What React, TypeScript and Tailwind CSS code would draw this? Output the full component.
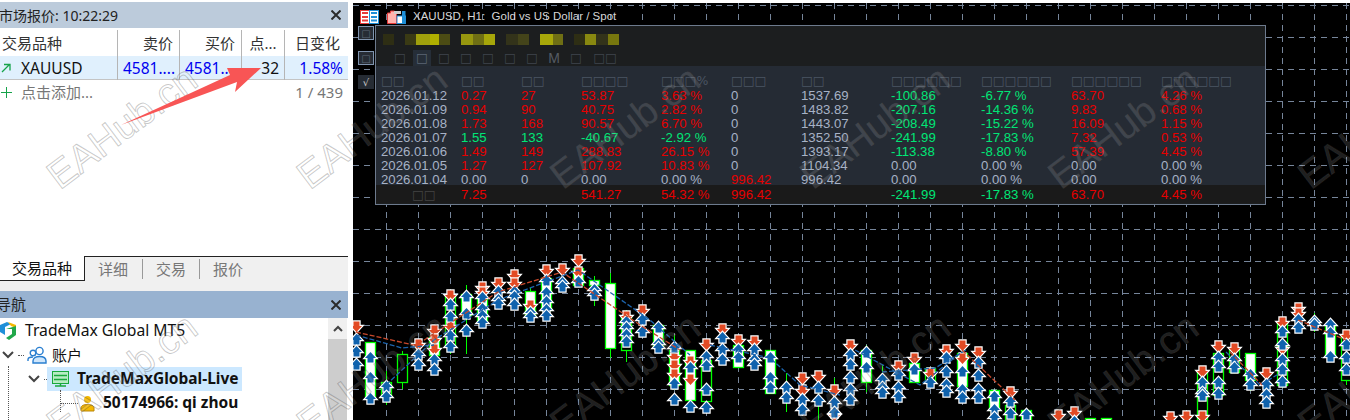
const cjk = 'font-["Noto_Sans","Noto_Sans_CJK_SC",sans-serif]'

type Col = { x: number; body?: [number, number]; wick?: [number, number]; solid?: boolean; u?: number[]; d?: number[] }

const cols: Col[] = [
  { x: 356, d: [326], u: [340, 352, 365] },
  { x: 370, body: [342, 396], solid: true, u: [358, 378, 399] },
  { x: 386, body: [382, 397], wick: [371, 405], u: [387, 397] },
  { x: 402, body: [354, 382], wick: [351, 389] },
  { x: 418, d: [344], u: [355, 365], wick: [340, 370] },
  { x: 434, body: [337, 355], solid: true, d: [330, 339, 349], u: [360, 370] },
  { x: 450, body: [296, 345], wick: [290, 354], d: [295, 326], u: [305, 317, 336, 347] },
  { x: 466, body: [294, 315], solid: true, wick: [285, 354], u: [297, 314, 331] },
  { x: 482, body: [297, 320], solid: true, wick: [285, 325], d: [287, 292], u: [298, 309, 316, 323] },
  { x: 498, d: [283], u: [292, 300, 304] },
  { x: 514, wick: [270, 310], d: [275, 283], u: [292, 297, 305] },
  { x: 530, body: [291, 315], solid: true, wick: [288, 320], d: [305], u: [313, 317] },
  { x: 546, body: [278, 310], solid: true, d: [270], u: [281, 293, 302, 310, 316] },
  { x: 562, d: [269], u: [283, 287] },
  { x: 578, body: [268, 285], solid: true, d: [260, 272], u: [282] },
  { x: 594, body: [280, 285], solid: true, wick: [276, 306], u: [290, 295] },
  { x: 610, body: [283, 348], solid: true, wick: [273, 358] },
  { x: 626, body: [316, 350], wick: [310, 362], d: [316], u: [322, 328, 335, 342] },
  { x: 642, d: [310], u: [320, 332] },
  { x: 658, body: [325, 347], solid: true, u: [328, 344, 348] },
  { x: 674, body: [350, 385], solid: true, wick: [335, 390], u: [348, 384, 400], d: [356, 365, 374] },
  { x: 690, body: [350, 400], solid: true, d: [361, 379], u: [368, 407] },
  { x: 706, body: [360, 401], d: [344], u: [357, 366, 390, 408] },
  { x: 722, d: [329], u: [338, 350, 360] },
  { x: 738, body: [345, 367], solid: true, d: [340], u: [350, 358] },
  { x: 754, d: [341], u: [350, 360, 365] },
  { x: 770, body: [350, 393], solid: true, u: [358, 378, 388] },
  { x: 786, wick: [373, 412], u: [388, 398] },
  { x: 802, d: [378, 390], u: [400, 410] },
  { x: 818, wick: [372, 420], d: [376], u: [388, 401] },
  { x: 834, wick: [378, 420], d: [390, 415], u: [403, 413] },
  { x: 850, wick: [340, 405], d: [345], u: [355, 365, 378, 390, 400] },
  { x: 866, body: [350, 382], solid: true, wick: [345, 392], u: [353, 368] },
  { x: 882, wick: [365, 398], u: [380, 388, 393] },
  { x: 898, d: [366], u: [375, 388, 397] },
  { x: 914, body: [363, 382], solid: true, d: [358], u: [370] },
  { x: 930, body: [368, 382], d: [373], u: [383] },
  { x: 946, d: [350], u: [358, 372, 385, 392] },
  { x: 962, body: [353, 386], solid: true, d: [345, 358], u: [372, 390, 398] },
  { x: 978, d: [352], u: [363, 376, 390, 398] },
  { x: 994, body: [390, 410], solid: true, u: [397, 410, 418] },
  { x: 1010, d: [392], u: [402, 414], body: [405, 420] },
  { x: 1026, body: [410, 425], solid: true, u: [415] },
  { x: 1058, d: [415] },
  { x: 1074, d: [412], u: [422] },
  { x: 1090, body: [418, 430], solid: true },
  { x: 1106, body: [418, 430], solid: true },
  { x: 1170, d: [417] },
  { x: 1186, d: [416] },
  { x: 1202, body: [372, 425], d: [371, 416], u: [383, 393, 396] },
  { x: 1218, body: [353, 395], d: [346], u: [358, 367, 383, 394] },
  { x: 1234, body: [350, 372], d: [348], u: [360, 368] },
  { x: 1250, body: [353, 380], solid: true, wick: [353, 391], u: [375, 385] },
  { x: 1266, d: [373], u: [385, 395, 403] },
  { x: 1282, body: [322, 385], wick: [318, 388], d: [322, 348], u: [332, 345, 360, 370, 382] },
  { x: 1298, d: [308, 313], u: [320, 328] },
  { x: 1314, wick: [313, 332], u: [322, 325] },
  { x: 1330, body: [325, 355], solid: true, u: [325, 333, 357] },
  { x: 1346, body: [335, 380], wick: [330, 385], d: [335], u: [345, 358, 370] },
]

const blocks: [number, string][] = [
  [11, '#2e2e14'], [11, 'transparent'], [11, '#3a3a14'], [14, '#a0a00c'], [9, '#b0b000'], [11, '#4c4c14'], [11, 'transparent'],
  [12, '#97970f'], [11, '#6f6f14'], [11, '#a6a60a'], [11, 'transparent'], [12, '#33331a'], [11, '#44441a'], [11, 'transparent'],
  [13, '#a8a80a'], [10, '#6f6f14'], [11, 'transparent'], [11, '#2e2e14'], [11, '#888810'], [12, '#33331a'], [11, '#77770e'],
]

const R = 'text-[#e60000]'
const G = 'text-[#00e676]'
const N = 'text-[#a7b2c6]'

const rows: [string, string][][] = [
  [['2026.01.12', N], ['0.27', R], ['27', R], ['53.87', R], ['3.63 %', R], ['0', N], ['1537.69', N], ['-100.86', G], ['-6.77 %', G], ['63.70', R], ['4.26 %', R]],
  [['2026.01.09', N], ['0.94', R], ['90', R], ['40.75', R], ['2.82 %', R], ['0', N], ['1483.82', N], ['-207.16', G], ['-14.36 %', G], ['9.83', R], ['0.68 %', R]],
  [['2026.01.08', N], ['1.73', R], ['168', R], ['90.57', R], ['6.70 %', R], ['0', N], ['1443.07', N], ['-208.49', G], ['-15.22 %', G], ['16.09', R], ['1.15 %', R]],
  [['2026.01.07', N], ['1.55', G], ['133', G], ['-40.67', G], ['-2.92 %', G], ['0', N], ['1352.50', N], ['-241.99', G], ['-17.83 %', G], ['7.32', R], ['0.53 %', R]],
  [['2026.01.06', N], ['1.49', R], ['149', R], ['288.83', R], ['26.15 %', R], ['0', N], ['1393.17', N], ['-113.38', G], ['-8.80 %', G], ['57.39', R], ['4.45 %', R]],
  [['2026.01.05', N], ['1.27', R], ['127', R], ['107.92', R], ['10.83 %', R], ['0', N], ['1104.34', N], ['0.00', N], ['0.00 %', N], ['0.00', N], ['0.00 %', N]],
  [['2026.01.04', N], ['0.00', N], ['0', N], ['0.00', N], ['0.00 %', N], ['996.42', R], ['996.42', N], ['0.00', N], ['0.00 %', N], ['0.00', N], ['0.00 %', N]],
]

const heads = ['□□', '□□', '□□', '□□□□', '□□□%', '□□□', '□□', '□□□□□□', '□□□□□□', '□□□□□□', '□□□□□□']
const footer: [string, string][] = [['', N], ['7.25', R], ['', N], ['541.27', R], ['54.32 %', R], ['996.42', R], ['', N], ['-241.99', G], ['-17.83 %', G], ['63.70', R], ['4.45 %', R]]
const tabs = ['□', '□', '□', '□', '□', '□', '□', 'M', '□', '□□']

const grid = 'grid grid-cols-[80px_60px_60px_80px_70px_70px_90px_90px_90px_90px_1fr] pl-[5px]'

function UpArrow({ x, y }: { x: number; y: number }) {
  return <path d={`M${x} ${y - 6}l5.5 6h-2.5v4.5h-6v-4.5h-2.5z`} fill="#0f62ad" stroke="#fff" strokeWidth="2.4" paintOrder="stroke" />
}

function DownArrow({ x, y }: { x: number; y: number }) {
  return <path d={`M${x} ${y + 6}l-5.5 -6h2.5v-4.5h6v4.5h2.5z`} fill="#e24a24" stroke="#fff" strokeWidth="2.4" paintOrder="stroke" />
}

function ChartCanvas() {
  const vs = Array.from({ length: 31 }, (_, i) => 386.5 + i * 32)
  const hs = Array.from({ length: 13 }, (_, i) => 5.5 + i * 32)
  return (
    <svg className="absolute inset-0" width="997" height="417" viewBox="353 3 997 417">
      {vs.map((v) => (
        <line key={v} x1={v} y1="3" x2={v} y2="420" stroke="#76859a" strokeDasharray="6 5" />
      ))}
      {hs.map((h) => (
        <line key={h} x1="353" y1={h} x2="1350" y2={h} stroke="#76859a" strokeDasharray="6 5" />
      ))}
      {cols.map((c) => (
        <g key={c.x}>
          {c.wick && <line x1={c.x + 0.5} y1={c.wick[0]} x2={c.x + 0.5} y2={c.wick[1]} stroke="#00ff00" />}
          {c.body && (
            <rect
              x={c.x - 4.5}
              y={c.body[0] + 0.5}
              width="10"
              height={c.body[1] - c.body[0]}
              fill={c.solid ? '#fff' : '#000'}
              stroke="#00ff00"
              strokeWidth="1.3"
            />
          )}
        </g>
      ))}
      {cols.map((c) => (
        <g key={c.x}>
          {c.d?.map((y) => <DownArrow key={y} x={c.x + 0.5} y={y} />)}
          {c.u?.map((y) => <UpArrow key={y} x={c.x + 0.5} y={y} />)}
        </g>
      ))}
      <g fill="none" strokeWidth="1.3" strokeDasharray="5 2">
        <polyline points="356,335 402,348 434,345" stroke="#1d64ad" />
        <polyline points="356,332 418,346" stroke="#c8492c" />
        <polyline points="386,385 434,340 498,300 578,270 650,320 690,355" stroke="#1d64ad" />
        <polyline points="418,344 498,292 562,272 640,325 680,350" stroke="#c8492c" />
        <polyline points="710,345 770,358 800,385 840,395" stroke="#1d64ad" />
        <polyline points="855,350 920,385 962,352" stroke="#1d64ad" />
        <polyline points="882,372 935,368 966,350" stroke="#1d64ad" />
        <polyline points="962,350 1015,400" stroke="#c8492c" />
        <polyline points="1226,352 1260,385 1282,372" stroke="#1d64ad" />
        <polyline points="1230,352 1262,385" stroke="#c8492c" />
        <polyline points="1298,320 1346,340" stroke="#c8492c" />
      </g>
    </svg>
  )
}

function StatsPanel() {
  return (
    <div className="absolute left-[22px] top-[22px] w-[891px] h-[180px] border border-[#6d7a8d] bg-[#1c1e1f] font-['Liberation_Sans',sans-serif] text-[13.2px] leading-[14px]">
      <div className="h-[24px] flex items-start pt-[8px] pl-[7px]">
        {blocks.map(([w, c], i) => (
          <div key={i} className="h-[11px]" style={{ width: w, backgroundColor: c }} />
        ))}
      </div>
      <div className="h-[16px] flex pl-[13px] font-['DejaVu_Sans',sans-serif] text-[#3f454d]">
        {tabs.map((t, i) => (
          <div
            key={i}
            className={`flex items-center justify-center text-[12.5px] ${i === 1 ? 'w-[18px] mx-[2px] bg-[#262e38] text-[#5c6675]' : 'w-[22px]'} ${t === 'M' ? "font-['Liberation_Sans',sans-serif] text-[14px] text-[#555b63]" : ''} ${i === 9 ? 'ml-[7px]' : ''}`}
          >
            {t}
          </div>
        ))}
      </div>
      <div className="bg-[#252b34] h-[119px] pt-[8px]">
        <div className={`${grid} text-[#4b5563] font-['DejaVu_Sans',sans-serif] text-[12.5px] h-[14px]`}>
          {heads.map((h, i) => (
            <div key={i} className="whitespace-nowrap">{h}</div>
          ))}
        </div>
        <div className="mt-[1px]">
          {rows.map((r) => (
            <div key={r[0][0]} className={`${grid} h-[14px] whitespace-nowrap`}>
              {r.map(([t, c], i) => (
                <div key={i} className={c}>{t}</div>
              ))}
            </div>
          ))}
        </div>
      </div>
      <div className={`${grid} h-[18px] pt-[3px] bg-[#1a1a1a] whitespace-nowrap`}>
        {footer.map(([t, c], i) => (
          <div key={i} className={c}>
            {i === 0 ? <span className="font-['DejaVu_Sans',sans-serif] text-[12.5px] text-[#444] pl-[31px]">□□</span> : t}
          </div>
        ))}
      </div>
    </div>
  )
}

function ChartTitle() {
  return (
    <div className="absolute left-[7px] top-[7px] flex items-center h-[14px]">
      <svg width="19" height="14" viewBox="0 0 19 14">
        <rect x="0.5" y="0.5" width="9" height="13" fill="#fff" stroke="#e83a3a" />
        <rect x="9.5" y="0.5" width="9" height="13" fill="#fff" stroke="#1f8fd8" />
        <path d="M2 3h6M2 7h6M2 10.5h6" stroke="#e83a3a" strokeWidth="2" />
        <path d="M11 3h6M11 7h6M11 10.5h6" stroke="#1f8fd8" strokeWidth="2" />
      </svg>
      <svg width="19" height="14" viewBox="0 0 19 14" className="ml-[8px]">
        <path d="M0.5 3h3V1h4v2h2v10.5h-9z" fill="#ffb3ad" stroke="#e83a3a" />
        <rect x="10" y="6" width="8.5" height="7.5" fill="#fff" stroke="#1f8fd8" />
        <rect x="15" y="1" width="3.5" height="12.5" fill="#1f8fd8" />
        <rect x="7" y="1" width="7" height="3" fill="#cfcfcf" />
      </svg>
      <span className="ml-[7px] text-[11.5px] text-[#d6d6d6] whitespace-pre font-['Liberation_Sans',sans-serif]">XAUUSD, H1:  Gold vs US Dollar / Spot</span>
    </div>
  )
}

function SideButton({ top, label, plain }: { top: string; label: string; plain?: boolean }) {
  return (
    <div className={`absolute left-[5px] ${top} w-[16px] h-[14px] border bg-[#262c34] text-[10px] flex items-center justify-center font-['DejaVu_Sans',sans-serif] ${plain ? 'border-transparent text-[#c8c8c8]' : 'border-[#7f93ad] text-[#5c6675]'}`}>
      {label}
    </div>
  )
}

function CloseIcon() {
  return (
    <svg width="10" height="10" viewBox="0 0 10 10" className="mr-[7px]">
      <path d="M0.5 0.5l9 9M9.5 0.5l-9 9" stroke="#2b2b2b" strokeWidth="2" />
    </svg>
  )
}

function Chevron({ className }: { className: string }) {
  return (
    <svg width="12" height="8" viewBox="0 0 12 8" className={className}>
      <path d="M1 1l5 5 5-5" fill="none" stroke="#444" strokeWidth="2" />
    </svg>
  )
}

function MarketWatch() {
  return (
    <div className="h-[254px] flex flex-col">
      <div className="h-[26px] mt-[2px] bg-[#bccbdb] flex items-center justify-between text-[14px] text-[#222]">
        <span className="-ml-px">市场报价: 10:22:29</span>
        <CloseIcon />
      </div>
      <div className="grid grid-cols-[118px_62px_62px_43px_1fr] h-[26px] mt-[2px] text-[15px] text-[#333] leading-[26px]">
        <div className="border-r border-[#b5b5b5] pl-[2px]">交易品种</div>
        <div className="border-r border-[#b5b5b5] text-right pr-[6px]">卖价</div>
        <div className="border-r border-[#b5b5b5] text-right pr-[6px]">买价</div>
        <div className="border-r border-[#b5b5b5] text-center">点...</div>
        <div className="text-right pr-[8px]">日变化</div>
      </div>
      <div className="grid grid-cols-[118px_62px_62px_43px_1fr] h-[24px] bg-[#e0f0fd] border-b border-[#c4c4c4] text-[15.5px] leading-[24px]">
        <div className="border-r border-[#b5b5b5] flex items-center">
          <svg width="10" height="10" viewBox="0 0 10 10" className="ml-[1px]">
            <path d="M1 9l7-7M3 1.5h6v6" fill="none" stroke="#16a34a" strokeWidth="1.3" />
          </svg>
          <span className="ml-[10px] text-[#111]">XAUUSD</span>
        </div>
        <div className="border-r border-[#b5b5b5] text-[#0000f0] overflow-hidden pl-[5px] whitespace-nowrap">4581....</div>
        <div className="border-r border-[#b5b5b5] text-[#0000f0] overflow-hidden pl-[5px] whitespace-nowrap">4581..</div>
        <div className="border-r border-[#b5b5b5] text-right pr-[5px] text-[#111]">32</div>
        <div className="text-right pr-[5px] text-[#0000f0]">1.58%</div>
      </div>
      <div className="h-[24px] flex items-center text-[15px] text-[#777]">
        <svg width="11" height="11" viewBox="0 0 11 11" className="ml-[1px]">
          <path d="M5.5 0v11M0 5.5h11" stroke="#16a34a" />
        </svg>
        <span className="ml-[9px]">点击添加...</span>
        <span className="ml-auto mr-[5px]">1 / 439</span>
      </div>
    </div>
  )
}

function Tabs() {
  return (
    <div className="h-[35px] bg-[#f0f0f0] text-[15px] text-[#777]">
      <div className="h-[25px] flex items-stretch">
        <div className="w-[85px] bg-white border-r border-b border-[#222] text-[#111] flex items-center pl-[12px]">交易品种</div>
        <div className="flex-1 border-t border-[#222] flex items-center pl-[13px]">
          <span className="pr-[14px] border-r border-[#999] leading-[20px]">详细</span>
          <span className="px-[13px] border-r border-[#999] leading-[20px]">交易</span>
          <span className="pl-[13px] leading-[20px]">报价</span>
        </div>
      </div>
    </div>
  )
}

function Navigator() {
  return (
    <div className="flex-1 flex flex-col min-h-0">
      <div className="h-[27px] bg-[#98b2d0] flex items-center justify-between text-[15px] text-[#222]">
        <span className="-ml-[4px]">导航</span>
        <CloseIcon />
      </div>
      <div className="flex-1 flex min-h-0">
        <div className="relative flex-1 text-[15.5px] text-[#111] overflow-hidden">
          <div className="h-[25px] flex items-center">
            <svg width="18" height="20" viewBox="0 0 18 20" className="ml-[-1px]">
              <path d="M1 4l7-3 4 2-6 3v8l-5-3z" fill="#1f8fd8" />
              <path d="M9 1l8 3v3l-5-2z" fill="#f5b800" />
              <path d="M7 8l10-3v9l-7 5-3-2 6-4V8z" fill="#22a84a" />
            </svg>
            <span className="ml-[8px] text-[15.7px]">TradeMax Global MT5</span>
          </div>
          <div className="h-[24px] flex items-center">
            <Chevron className="ml-[2px]" />
            <span className="ml-[4px] w-[6px] border-t border-dotted border-[#555]" />
            <svg width="20" height="18" viewBox="0 0 20 18" className="ml-[3px]">
              <circle cx="12.5" cy="5" r="3.6" fill="none" stroke="#2a7fd0" strokeWidth="1.4" />
              <circle cx="6" cy="7" r="2.8" fill="none" stroke="#2a7fd0" strokeWidth="1.4" />
              <path d="M6 17v-2c0-3 3-4.500 6.500-4.500S19 12 19 15v2z" fill="#cfe6fb" stroke="#2a7fd0" strokeWidth="1.4" />
              <path d="M1 15v-1.500C1 12 3 11 6 11" fill="none" stroke="#2a7fd0" strokeWidth="1.4" />
            </svg>
            <span className="ml-[5px] text-[15px]">账户</span>
          </div>
          <div className="h-[24px] flex items-center">
            <Chevron className="ml-[28px]" />
            <span className="ml-[4px] w-[5px] border-t border-dotted border-[#555]" />
            <div className="flex items-center h-[24px] bg-[#cce8ff] -ml-[2px] pl-[5px] w-[195px]">
              <svg width="17" height="16" viewBox="0 0 17 16">
                <rect x="0.5" y="0.5" width="16" height="12" fill="#b7ecc4" stroke="#18a83c" />
                <path d="M2 4.5h13M2 8.5h13" stroke="#18a83c" strokeWidth="1.5" />
                <path d="M3 15h11M8.5 12v3" stroke="#18a83c" strokeWidth="1.5" />
              </svg>
              <span className="ml-[8px] font-bold whitespace-nowrap">TradeMaxGlobal-Live</span>
            </div>
          </div>
          <div className="h-[24px] flex items-center">
            <span className="ml-[60px] w-[18px] border-t border-dotted border-[#555]" />
            <svg width="15" height="17" viewBox="0 0 15 17" className="ml-[2px]">
              <circle cx="7.5" cy="4.5" r="3.5" fill="#f5b800" />
              <path d="M1 16v-3c0-2.500 3-3.500 6.500-3.500S14 10.500 14 13v3z" fill="#f5b800" stroke="#b9860b" />
            </svg>
            <span className="ml-[8px] font-bold whitespace-nowrap">50174966: qi zhou</span>
          </div>
          <span className="absolute left-[8px] top-[48px] h-[60px] border-l border-dotted border-[#555]" />
          <span className="absolute left-[60px] top-[72px] h-[22px] border-l border-dotted border-[#555]" />
        </div>
        <div className="w-[19px] mr-px bg-[#cdcdcd] flex flex-col">
          <div className="h-[21px] bg-[#f0f0f0] flex items-center justify-center">
            <svg width="10" height="7" viewBox="0 0 10 7">
              <path d="M1 6l4-4 4 4" fill="none" stroke="#444" strokeWidth="2" />
            </svg>
          </div>
        </div>
      </div>
    </div>
  )
}

const wmXs = [52, 302, 555, 805, 1053, 1303]
const wmYs = [80, 328]

function Watermarks() {
  return (
    <div className="absolute inset-0 overflow-hidden pointer-events-none">
      {wmYs.flatMap((y) =>
        wmXs.map((x) => (
          <span
            key={`${x}-${y}`}
            className="absolute w-[200px] h-[50px] font-['Liberation_Sans',sans-serif] text-[39px] leading-[50px] whitespace-nowrap origin-left -rotate-[37deg] text-white/15 [-webkit-text-stroke:1px_rgba(60,60,60,0.28)]"
            style={{ left: x, top: y + 75 }}
          >
            EAHub.cn
          </span>
        )),
      )}
    </div>
  )
}

export default function App() {
  return (
    <div className={`relative w-[1350px] h-[420px] flex overflow-hidden bg-white ${cjk}`}>
      <aside className="w-[348px] flex flex-col">
        <MarketWatch />
        <div className="h-[2px]" />
        <Tabs />
        <Navigator />
      </aside>
      <main className="relative ml-[5px] mt-[3px] flex-1 bg-black overflow-hidden">
        <ChartCanvas />
        <ChartTitle />
        <SideButton top="top-[23px]" label="□" />
        <SideButton top="top-[48px]" label="□" />
        <SideButton top="top-[72px]" label="√" plain />
        <StatsPanel />
      </main>
      <Watermarks />
      <svg className="absolute left-0 top-0" width="300" height="140" viewBox="0 0 300 140">
        <path d="M121 125L230 75L227 68L261 68L235 92L237 82Z" fill="#f85555" />
      </svg>
    </div>
  )
}
